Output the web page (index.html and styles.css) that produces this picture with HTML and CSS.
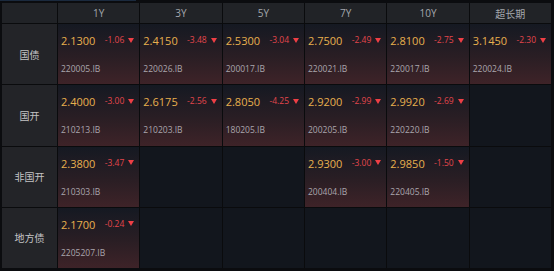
FILE: index.html
```html
<!DOCTYPE html>
<html lang="zh-CN">
<head>
<meta charset="utf-8">
<title>收益率矩阵</title>
<link rel="stylesheet" href="styles.css">
</head>
<body>
<div class="board">
  <div class="topbar"><span class="tab"></span></div>
  <div class="grid">
    <div class="hd"></div>
    <div class="hd">1Y</div>
    <div class="hd">3Y</div>
    <div class="hd">5Y</div>
    <div class="hd">7Y</div>
    <div class="hd">10Y</div>
    <div class="hd">超长期</div>

    <div class="lbl">国债</div>
    <div class="cell"><div class="top"><span class="px">2.1300</span><span class="chg">-1.06<svg class="tri" viewBox="0 0 6 5"><path d="M0 0H6L3 5Z"/></svg></span></div><div class="code">220005.IB</div></div>
    <div class="cell"><div class="top"><span class="px">2.4150</span><span class="chg">-3.48<svg class="tri" viewBox="0 0 6 5"><path d="M0 0H6L3 5Z"/></svg></span></div><div class="code">220026.IB</div></div>
    <div class="cell"><div class="top"><span class="px">2.5300</span><span class="chg">-3.04<svg class="tri" viewBox="0 0 6 5"><path d="M0 0H6L3 5Z"/></svg></span></div><div class="code">200017.IB</div></div>
    <div class="cell"><div class="top"><span class="px">2.7500</span><span class="chg">-2.49<svg class="tri" viewBox="0 0 6 5"><path d="M0 0H6L3 5Z"/></svg></span></div><div class="code">220021.IB</div></div>
    <div class="cell"><div class="top"><span class="px">2.8100</span><span class="chg">-2.75<svg class="tri" viewBox="0 0 6 5"><path d="M0 0H6L3 5Z"/></svg></span></div><div class="code">220017.IB</div></div>
    <div class="cell"><div class="top"><span class="px">3.1450</span><span class="chg">-2.30<svg class="tri" viewBox="0 0 6 5"><path d="M0 0H6L3 5Z"/></svg></span></div><div class="code">220024.IB</div></div>

    <div class="lbl">国开</div>
    <div class="cell"><div class="top"><span class="px">2.4000</span><span class="chg">-3.00<svg class="tri" viewBox="0 0 6 5"><path d="M0 0H6L3 5Z"/></svg></span></div><div class="code">210213.IB</div></div>
    <div class="cell"><div class="top"><span class="px">2.6175</span><span class="chg">-2.56<svg class="tri" viewBox="0 0 6 5"><path d="M0 0H6L3 5Z"/></svg></span></div><div class="code">210203.IB</div></div>
    <div class="cell"><div class="top"><span class="px">2.8050</span><span class="chg">-4.25<svg class="tri" viewBox="0 0 6 5"><path d="M0 0H6L3 5Z"/></svg></span></div><div class="code">180205.IB</div></div>
    <div class="cell"><div class="top"><span class="px">2.9200</span><span class="chg">-2.99<svg class="tri" viewBox="0 0 6 5"><path d="M0 0H6L3 5Z"/></svg></span></div><div class="code">200205.IB</div></div>
    <div class="cell"><div class="top"><span class="px">2.9920</span><span class="chg">-2.69<svg class="tri" viewBox="0 0 6 5"><path d="M0 0H6L3 5Z"/></svg></span></div><div class="code">220220.IB</div></div>
    <div class="empty"></div>

    <div class="lbl">非国开</div>
    <div class="cell"><div class="top"><span class="px">2.3800</span><span class="chg">-3.47<svg class="tri" viewBox="0 0 6 5"><path d="M0 0H6L3 5Z"/></svg></span></div><div class="code">210303.IB</div></div>
    <div class="empty"></div>
    <div class="empty"></div>
    <div class="cell"><div class="top"><span class="px">2.9300</span><span class="chg">-3.00<svg class="tri" viewBox="0 0 6 5"><path d="M0 0H6L3 5Z"/></svg></span></div><div class="code">200404.IB</div></div>
    <div class="cell"><div class="top"><span class="px">2.9850</span><span class="chg">-1.50<svg class="tri" viewBox="0 0 6 5"><path d="M0 0H6L3 5Z"/></svg></span></div><div class="code">220405.IB</div></div>
    <div class="empty"></div>

    <div class="lbl">地方债</div>
    <div class="cell"><div class="top"><span class="px">2.1700</span><span class="chg">-0.24<svg class="tri" viewBox="0 0 6 5"><path d="M0 0H6L3 5Z"/></svg></span></div><div class="code">2205207.IB</div></div>
    <div class="empty"></div>
    <div class="empty"></div>
    <div class="empty"></div>
    <div class="empty"></div>
    <div class="empty"></div>
  </div>
</div>
</body>
</html>
```
FILE: styles.css
```css
html, body {
  margin: 0;
  padding: 0;
  background: #0b0c0f;
  font-family: "Open Sans", "Noto Sans CJK SC", sans-serif;
}

.board {
  width: 554px;
  height: 271px;
  box-sizing: border-box;
  padding: 0 3px 0 2px;
}

.topbar {
  height: 1px;
  margin-left: -2px;
  display: flex;
}

.tab {
  width: 136px;
  background: #1b2a3e;
}

.grid {
  margin-top: 2px;
  height: 265px;
  display: grid;
  grid-template-columns: 55px repeat(6, 1fr);
  grid-template-rows: 20px repeat(4, 1fr);
  gap: 1px;
  background: #0a0b0d;
}

.hd {
  background: #212327;
  color: #a4a8ae;
  font-size: 10px;
  display: flex;
  align-items: center;
  justify-content: center;
}

.lbl {
  background: #232428;
  color: #c3c3c5;
  font-size: 10px;
  display: flex;
  align-items: center;
  justify-content: center;
}

.empty {
  background: #12161d;
}

.cell {
  background: linear-gradient(to bottom, #151922 0%, #2a1e24 55%, #3e2328 100%);
  padding: 10px 5px 0 3px;
  display: flex;
  flex-direction: column;
}

.top {
  display: flex;
  justify-content: space-between;
  align-items: flex-start;
  height: 14px;
}

.px {
  color: #e8b04e;
  font-size: 11px;
  line-height: 14px;
}

.chg {
  color: #e3464c;
  font-size: 8.5px;
  line-height: 14px;
  margin-top: -1px;
  display: flex;
  align-items: center;
  gap: 4px;
}

.tri {
  width: 6px;
  height: 5px;
  fill: #ee3f45;
}

.code {
  color: #aaa6ad;
  font-size: 8.5px;
  line-height: 12px;
  margin-top: 15px;
}
```
